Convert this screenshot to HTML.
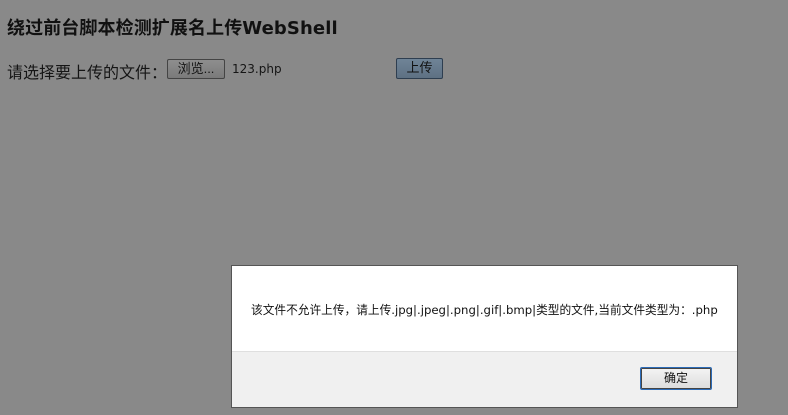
<!DOCTYPE html>
<html><head><meta charset="utf-8"><style>
body{margin:0;width:788px;height:415px;background:#898989;font-family:"DejaVu Sans","Noto Sans CJK SC",sans-serif;position:relative;overflow:hidden;color:#111}
.t{position:absolute;left:7px;top:14px;font-size:18px;font-weight:bold;color:#111;white-space:nowrap;letter-spacing:0.1px}
.l{position:absolute;left:7px;top:59px;font-size:16px;color:#151515;white-space:nowrap;font-family:"Noto Sans CJK SC",sans-serif}
.b1{position:absolute;left:167px;top:59px;width:56px;height:18px;border:1px solid #444;border-radius:2px;background:linear-gradient(#8e8e8e,#7a7a7a);font-size:13px;text-align:center;line-height:18px;color:#151515;font-family:"Liberation Sans","Noto Sans CJK SC",sans-serif}
.f{position:absolute;left:232px;top:62px;font-size:12px;color:#151515}
.b2{position:absolute;left:396px;top:58px;width:45px;height:19px;border:1px solid #2e3e50;border-radius:2px;background:linear-gradient(#6f8497,#5e7183);font-size:13px;text-align:center;line-height:19px;color:#111}
.d{position:absolute;left:231px;top:265px;width:507px;height:143px;background:#fff;border:1px solid #555;box-sizing:border-box}
.m{position:absolute;left:19px;top:35px;font-size:11.7px;color:#111;white-space:nowrap}
.ft{position:absolute;left:0;right:0;top:85px;bottom:0;background:#f0f0f0;border-top:1px solid #dfdfdf}
.ok{position:absolute;left:408px;top:15px;width:70px;height:21px;border:1px solid #2b6bb8;border-radius:2px;background:linear-gradient(#f4f4f4,#dcdcdc);box-shadow:inset 0 0 0 1px #444;font-size:12px;text-align:center;line-height:21px}
</style></head><body>
<div class="t">绕过前台脚本检测扩展名上传WebShell</div>
<div class="l">请选择要上传的文件：</div>
<div class="b1">浏览...</div>
<div class="f">123.php</div>
<div class="b2">上传</div>
<div class="d">
<div class="m">该文件不允许上传，请上传.jpg|.jpeg|.png|.gif|.bmp|类型的文件,当前文件类型为：.php</div>
<div class="ft"><div class="ok">确定</div></div>
</div>
</body></html>
